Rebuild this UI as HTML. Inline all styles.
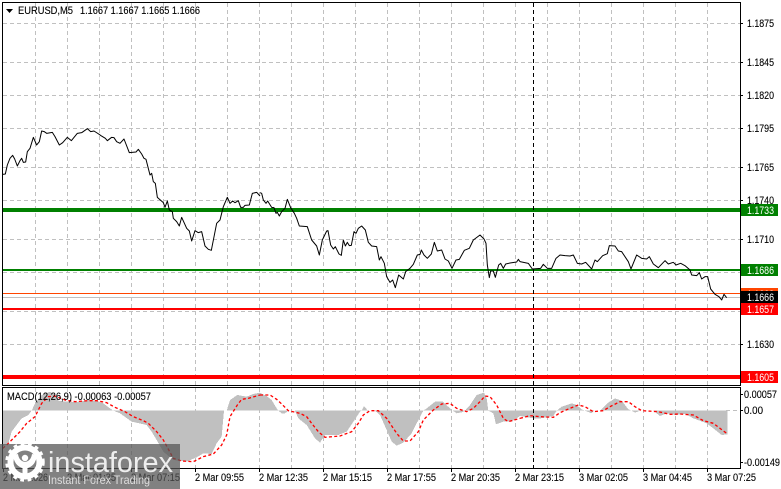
<!DOCTYPE html>
<html><head><meta charset="utf-8"><style>
html,body{margin:0;padding:0;background:#fff;width:781px;height:489px;overflow:hidden}
svg{display:block}
text{font-family:"Liberation Sans",sans-serif;font-size:11px;fill:#000;stroke:#000;stroke-width:.12}
.w{fill:#fff;stroke:none}
.g{stroke:#c0c0c0;stroke-width:1;stroke-dasharray:4 3;fill:none}
.p{fill:none;stroke:#000;stroke-width:3;stroke-linejoin:round}
.h{fill:#c0c0c0;stroke:none}
.r{fill:none;stroke:#f00;stroke-width:4;stroke-dasharray:9 7}
</style></head><body>
<svg width="781" height="489" viewBox="0 0 781 489" xmlns="http://www.w3.org/2000/svg">
<rect width="781" height="489" fill="#fff"/>
<!-- horizontal grid -->
<path class="g" d="M3 23.5H740M3 62.5H740M3 95.5H740M3 128.5H740M3 167.5H740M3 200.5H740M3 239.5H740M3 272.5H740M3 311.5H740M3 344.5H740M726 410.5H740"/>
<!-- vertical grid -->
<path class="g" d="M35.5 3V385M67.5 3V385M99.5 3V385M131.5 3V385M163.5 3V385M195.5 3V385M227.5 3V385M259.5 3V385M291.5 3V385M323.5 3V385M355.5 3V385M387.5 3V385M419.5 3V385M451.5 3V385M483.5 3V385M515.5 3V385M547.5 3V385M579.5 3V385M611.5 3V385M643.5 3V385M675.5 3V385M707.5 3V385"/>
<path class="g" d="M35.5 388V468M67.5 388V468M131.5 388V468M195.5 388V468M259.5 388V468M291.5 388V468M323.5 388V468M355.5 388V468M387.5 388V468M419.5 388V468M451.5 388V468M483.5 388V468M515.5 388V468M547.5 388V468M579.5 388V468M611.5 388V468M643.5 388V468M675.5 388V468M707.5 388V468"/>
<!-- histogram -->
<g transform="translate(0,380) scale(.33333)" shape-rendering="crispEdges">
<polygon class="h" points="8,92 8,200 25,190 35,155 50,135 65,115 85,105 95,92 105,70 125,45 150,35 165,45 175,62 200,65 230,66 265,60 290,62 310,70 330,85 340,92 360,100 395,125 440,135 455,155 470,180 490,215 520,240 560,245 590,232 610,220 635,222 650,190 665,170 672,92 680,92 690,60 712,45 740,50 760,42 780,38 780,92"/>
</g>
<g transform="translate(260,380) scale(.33333)" shape-rendering="crispEdges">
<polygon class="h" points="0,92 0,38 20,48 35,60 50,85 55,92 65,100 75,100 85,92 105,92 115,115 140,135 165,175 180,188 195,165 235,165 260,155 280,125 300,95 305,92 312,78 322,90 330,92 345,92 360,105 380,150 395,185 410,197 430,188 455,160 470,130 490,92 500,85 525,65 548,65 570,85 578,92 590,100 605,97 615,92 630,75 650,45 672,38 680,55 685,92 700,100 708,133 730,125 755,125 780,108 780,92"/>
</g>
<g transform="translate(520,380) scale(.33333)" shape-rendering="crispEdges">
<polygon class="h" points="0,92 0,108 40,115 62,115 100,108 110,92 125,80 155,70 170,75 185,88 195,92 215,100 222,92 240,92 262,70 285,55 305,62 325,88 335,92 345,98 360,92 400,92 420,108 440,100 465,105 495,102 520,115 560,130 580,145 605,165 623,163 623,92"/>
</g>
<!-- macd signal -->
<g transform="translate(0,380) scale(.33333)">
<polyline class="r" points="8,205 20,195 40,175 60,155 80,130 105,110 125,70 145,50 165,48 195,60 225,65 265,62 290,62 320,68 345,82 375,95 400,110 430,122 445,130 470,155 490,180 520,235 545,243 580,245 610,230 640,222 665,195 680,165 690,110 712,75 725,58 745,55 780,45"/>
</g>
<g transform="translate(260,380) scale(.33333)">
<polyline class="r" points="0,45 30,45 50,58 65,72 85,92 120,100 140,110 155,130 175,155 195,172 240,168 275,155 295,130 310,105 330,92 355,92 380,115 410,160 430,183 450,183 475,155 490,120 520,90 545,72 570,70 590,85 620,95 640,85 660,65 675,48 690,50 710,75 730,115 745,125 780,115"/>
</g>
<g transform="translate(520,380) scale(.33333)">
<polyline class="r" points="0,115 30,107 60,110 100,112 120,98 150,85 175,75 195,80 220,95 250,92 270,80 300,65 325,65 345,80 365,92 415,95 450,103 480,102 520,105 550,122 580,130 620,160"/>
</g>
<!-- level lines -->
<rect x="3" y="297" width="737" height="1" fill="#c0c0c0"/>
<rect x="3" y="293" width="737" height="1" fill="#ff4500"/>
<rect x="3" y="208" width="737" height="4" fill="#008000"/>
<rect x="3" y="269" width="737" height="2" fill="#008000"/>
<rect x="3" y="308" width="737" height="2" fill="#f00"/>
<rect x="3" y="375" width="737" height="4" fill="#f00"/>
<!-- price -->
<g transform="translate(0,120) scale(.33333)">
<polyline class="p" points="8,163 16,162 22,135 30,115 38,106 44,117 52,138 60,122 65,115 70,127 77,126 82,95 90,85 100,52 110,75 118,65 125,33 133,35 140,40 157,37 165,50 178,75 188,68 202,52 214,62 232,40 245,38 262,26 272,35 282,33 296,42 303,47 308,50 316,55 322,62 335,52 342,53 350,65 360,70 372,57 388,98 408,96 415,88 425,102 432,115 438,118 450,165 455,160 460,185 466,190 472,232 490,248 495,262 502,243 508,270 517,275 520,295 530,305 538,318 545,292 560,325 568,333 575,363 585,332 595,338 605,335 615,378 625,388 634,391 650,310 660,300 670,260 682,232 690,250 698,243 705,248 715,242 722,262 730,262 735,256 748,255 757,220 770,217 780,228"/>
</g>
<g transform="translate(260,165) scale(.33333)">
<polyline class="p" points="0,83 5,85 10,105 18,115 23,108 35,127 42,128 48,145 52,142 58,153 65,140 75,130 82,103 92,128 103,145 110,160 118,183 142,185 155,225 170,243 178,270 187,225 200,198 204,197 212,240 220,252 226,245 237,267 244,271 250,225 256,243 262,232 268,242 274,241 282,200 288,205 295,190 305,183 316,195 325,232 335,243 350,245 358,285 363,275 373,295 380,335 390,352 398,345 406,368 416,330 430,342 437,320 450,310 460,298 472,270 480,268 484,255 492,270 502,280 514,267 523,232 532,258 545,255 555,282 565,288 576,310 588,285 598,283 613,256 628,250 640,225 660,210 672,222 678,235 682,300 688,338 692,318 700,318 706,337 716,300 722,295 730,310 737,297 750,294 770,291 775,283 780,290"/>
</g>
<g transform="translate(520,165) scale(.33333)">
<polyline class="p" points="0,290 25,295 37,312 62,310 70,298 82,310 95,310 108,280 120,270 135,272 150,273 160,270 172,295 185,297 197,292 215,312 225,285 232,290 248,272 262,266 268,242 285,243 295,258 305,260 325,290 333,312 350,270 365,280 380,282 388,275 400,297 415,308 435,287 445,297 460,292 468,300 482,295 495,302 510,315 515,330 530,332 538,323 545,342 555,335 563,335 572,372 585,388 597,395 605,405 612,388 620,398"/>
</g>
<!-- crosshair vertical -->
<path d="M533.5 3V468" stroke="#000" stroke-width="1" stroke-dasharray="4 3" fill="none"/>
<!-- frames -->
<g fill="none" stroke="#000" stroke-width="1">
<path d="M2.5 2.5H740.5V385.5H2.5Z"/>
<path d="M2.5 387.5H740.5V468.5H2.5Z"/>
<path d="M740 23.5h3M740 62.5h3M740 95.5h3M740 128.5h3M740 167.5h3M740 200.5h3M740 239.5h3M740 272.5h3M740 311.5h3M740 344.5h3M740 394.5h3M740 410.5h3M740 462.5h3"/>
<path d="M3.5 468v4M67.5 468v4M131.5 468v4M195.5 468v4M259.5 468v4M323.5 468v4M387.5 468v4M451.5 468v4M515.5 468v4M579.5 468v4M643.5 468v4M707.5 468v4"/>
</g>
<!-- header -->
<polygon points="6,9 13,9 9.5,13" fill="#000"/>
<text x="18" y="14" textLength="55" lengthAdjust="spacingAndGlyphs">EURUSD,M5</text>
<text x="80" y="14" textLength="120" lengthAdjust="spacingAndGlyphs">1.1667 1.1667 1.1665 1.1666</text>
<!-- axis labels -->
<g>
<text x="747" y="27" textLength="27" lengthAdjust="spacingAndGlyphs">1.1875</text>
<text x="747" y="66" textLength="27" lengthAdjust="spacingAndGlyphs">1.1845</text>
<text x="747" y="99" textLength="27" lengthAdjust="spacingAndGlyphs">1.1820</text>
<text x="747" y="132" textLength="27" lengthAdjust="spacingAndGlyphs">1.1795</text>
<text x="747" y="171" textLength="27" lengthAdjust="spacingAndGlyphs">1.1765</text>
<text x="747" y="204" textLength="27" lengthAdjust="spacingAndGlyphs">1.1740</text>
<text x="747" y="243" textLength="27" lengthAdjust="spacingAndGlyphs">1.1710</text>
<text x="747" y="348" textLength="27" lengthAdjust="spacingAndGlyphs">1.1630</text>
</g>
<rect x="741" y="204" width="37" height="12" fill="#008000"/>
<text class="w" x="747" y="214" textLength="27" lengthAdjust="spacingAndGlyphs">1.1733</text>
<rect x="741" y="264" width="37" height="12" fill="#008000"/>
<text class="w" x="747" y="274" textLength="27" lengthAdjust="spacingAndGlyphs">1.1686</text>
<rect x="741" y="288" width="37" height="12" fill="#ff4500"/>
<text class="w" x="747" y="298" textLength="27" lengthAdjust="spacingAndGlyphs">1.1668</text>
<rect x="741" y="291" width="37" height="12" fill="#000"/>
<text class="w" x="747" y="301" textLength="27" lengthAdjust="spacingAndGlyphs">1.1666</text>
<rect x="741" y="303" width="37" height="12" fill="#f00"/>
<text class="w" x="747" y="313" textLength="27" lengthAdjust="spacingAndGlyphs">1.1657</text>
<rect x="741" y="371" width="37" height="12" fill="#f00"/>
<text class="w" x="747" y="381" textLength="27" lengthAdjust="spacingAndGlyphs">1.1605</text>
<!-- macd labels -->
<text x="7" y="400" textLength="144" lengthAdjust="spacingAndGlyphs">MACD(12,26,9) -0.00063 -0.00057</text>
<text x="744" y="398" textLength="33" lengthAdjust="spacingAndGlyphs">0.00057</text>
<text x="744" y="414" textLength="19" lengthAdjust="spacingAndGlyphs">0.00</text>
<text x="744" y="466" textLength="36" lengthAdjust="spacingAndGlyphs">-0.00149</text>
<!-- time labels -->
<g>
<text x="3" y="481" textLength="45" lengthAdjust="spacingAndGlyphs">2 Mar 2026</text>
<text x="67" y="481" textLength="49" lengthAdjust="spacingAndGlyphs">2 Mar 01:35</text>
<text x="131" y="481" textLength="49" lengthAdjust="spacingAndGlyphs">2 Mar 07:15</text>
<text x="195" y="481" textLength="49" lengthAdjust="spacingAndGlyphs">2 Mar 09:55</text>
<text x="259" y="481" textLength="49" lengthAdjust="spacingAndGlyphs">2 Mar 12:35</text>
<text x="323" y="481" textLength="49" lengthAdjust="spacingAndGlyphs">2 Mar 15:15</text>
<text x="387" y="481" textLength="49" lengthAdjust="spacingAndGlyphs">2 Mar 17:55</text>
<text x="451" y="481" textLength="49" lengthAdjust="spacingAndGlyphs">2 Mar 20:35</text>
<text x="515" y="481" textLength="49" lengthAdjust="spacingAndGlyphs">2 Mar 23:15</text>
<text x="579" y="481" textLength="49" lengthAdjust="spacingAndGlyphs">3 Mar 02:05</text>
<text x="643" y="481" textLength="49" lengthAdjust="spacingAndGlyphs">3 Mar 04:45</text>
<text x="707" y="481" textLength="49" lengthAdjust="spacingAndGlyphs">3 Mar 07:25</text>
</g>
<!-- watermark -->
<rect x="0" y="444" width="180" height="45" fill="#555" fill-opacity=".74"/>
<g fill="#fff" stroke="none">
<circle cx="25" cy="462" r="14.5" fill="none" stroke="#fff" stroke-width="6"/>
<g stroke="#fff" stroke-width="4.5" stroke-dasharray="3.6 3.5" fill="none"><circle cx="25" cy="462" r="17.5"/></g>
<circle cx="25" cy="458" r="3.2"/>
<rect x="22.5" y="462" width="5" height="13"/>
<path d="M13 455 l5 -1 q1 7 7 8 q6 -1 7 -8 l5 1 q-1 10 -9 13 h-6 q-8 -3 -9 -13z"/>
</g>
<text x="48" y="472" textLength="125" lengthAdjust="spacingAndGlyphs" style="font-size:29px;fill:#eee;stroke:none">instaforex</text>
<text x="48" y="484" textLength="102" lengthAdjust="spacingAndGlyphs" style="font-size:12px;fill:#ddd;stroke:none">Instant Forex Trading</text>
</svg>
</body></html>
